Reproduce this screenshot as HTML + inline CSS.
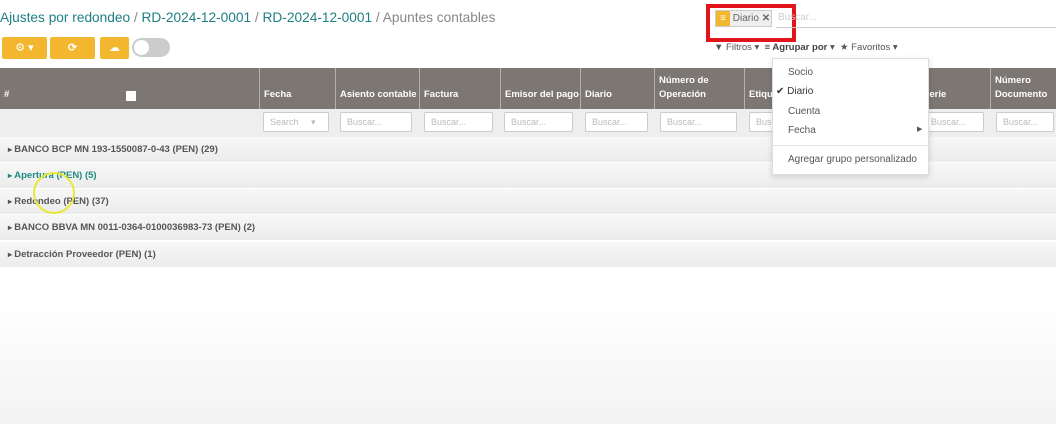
<!DOCTYPE html><html><head><meta charset="utf-8"><style>
*{box-sizing:border-box;margin:0;padding:0}
body{width:1056px;height:424px;overflow:hidden;background:#fff;font-family:"Liberation Sans",sans-serif;position:relative}
.a{position:absolute}
.bc{left:0;top:10px;font-size:13.7px;color:#1e7f82}
.bc .s{color:#888}
.btn{background:#f3b72f;height:22px;top:37px;border-radius:2px;color:#fff;font-size:11px;text-align:center;line-height:22px}
.hd{top:68px;height:41px;background:#7d7774}
.col{position:absolute;top:68px;height:41px;border-left:1px solid #b5b0ad;color:#fff;font-size:9.5px;font-weight:bold;padding:0 4px;display:flex;align-items:flex-end;padding-bottom:7px;line-height:14px}
.fr{top:109px;height:28px;left:0;width:1056px;background:#eeeeee}
.in{position:absolute;top:112px;height:20px;border:1px solid #ccc;background:#fff;font-size:9px;color:#bbb;padding:4px 6px;border-radius:2px}
.g{left:0;width:1056px;height:25px;background:linear-gradient(#f7f7f7,#ececec);font-size:9.5px;font-weight:bold;color:#555;padding-left:8px;line-height:25px}
.g:before{content:"▸ ";font-size:8px}
.dd{left:772px;top:58px;width:157px;height:117px;background:#fff;border:1px solid #ddd;box-shadow:0 2px 6px rgba(0,0,0,.15);font-size:10px;color:#555}
.dd div{position:absolute;left:15px}
</style></head><body>
<div class="a bc">Ajustes por redondeo <span class="s">/</span> RD-2024-12-0001 <span class="s">/</span> RD-2024-12-0001 <span class="s">/ Apuntes contables</span></div>
<div class="a btn" style="left:2px;width:45px">⚙ ▾</div>
<div class="a btn" style="left:50px;width:45px;font-weight:bold">⟳</div>
<div class="a btn" style="left:100px;width:29px">☁</div>
<div class="a" style="left:132px;top:38px;width:38px;height:19px;border-radius:10px;background:#ccc"><div class="a" style="left:2px;top:2px;width:15px;height:15px;border-radius:50%;background:#fff"></div></div>
<div class="a" style="left:706px;top:4px;width:90px;height:38px;border:4px solid #e0141a"></div>
<div class="a" style="left:715px;top:10px;width:57px;height:17px;border:1px solid #ccc;background:#eee;font-size:10px;color:#666;line-height:15px"><span style="display:inline-block;width:14px;height:15px;background:#f3b72f;color:#fff;text-align:center">≡</span> Diario <b>✕</b></div>
<div class="a" style="left:776px;top:27px;width:280px;border-top:1px solid #ccc"></div>
<div class="a" style="left:778px;top:12px;font-size:10px;color:#ccc">Buscar...</div>
<div class="a" style="left:714px;top:42px;font-size:9.5px;color:#555">▼ Filtros ▾ &nbsp;<b style="color:#444">≡ Agrupar por</b> ▾ &nbsp;★ Favoritos ▾</div>
<div class="a hd" style="left:0;width:1056px"></div>
<div class="col" style="left:0;border:0">#</div>
<div class="a" style="left:126px;top:91px;width:10px;height:10px;background:#fff"></div>
<div class="col" style="left:259px">Fecha</div>
<div class="col" style="left:335px">Asiento contable</div>
<div class="col" style="left:419px">Factura</div>
<div class="col" style="left:500px">Emisor del pago</div>
<div class="col" style="left:580px">Diario</div>
<div class="col" style="left:654px">Número de<br>Operación</div>
<div class="col" style="left:744px">Etiqueta</div>
<div class="col" style="left:918px">Serie</div>
<div class="col" style="left:990px">Número<br>Documento</div>
<div class="a fr"></div>
<div class="in" style="left:263px;width:66px">Search &nbsp;&nbsp;&nbsp; ▾</div>
<div class="in" style="left:340px;width:72px">Buscar...</div>
<div class="in" style="left:424px;width:69px">Buscar...</div>
<div class="in" style="left:504px;width:69px">Buscar...</div>
<div class="in" style="left:585px;width:63px">Buscar...</div>
<div class="in" style="left:660px;width:77px">Buscar...</div>
<div class="in" style="left:749px;width:60px">Buscar...</div>
<div class="in" style="left:924px;width:60px">Buscar...</div>
<div class="in" style="left:996px;width:58px">Buscar...</div>
<div class="a g" style="top:137px">BANCO BCP MN 193-1550087-0-43 (PEN) (29)</div>
<div class="a g" style="top:163px;color:#1e8a80">Apertura (PEN) (5)</div>
<div class="a g" style="top:189px">Redondeo (PEN) (37)</div>
<div class="a g" style="top:215px">BANCO BBVA MN 0011-0364-0100036983-73 (PEN) (2)</div>
<div class="a g" style="top:242px">Detracción Proveedor (PEN) (1)</div>
<div class="a" style="left:0;top:268px;width:1056px;height:156px;background:linear-gradient(#fff 20%,#f3f3f3)"></div>
<div class="a" style="left:33px;top:172px;width:42px;height:42px;border-radius:50%;border:2px solid #e8e83a"></div>
<div class="a dd">
<div style="top:8px">Socio</div>
<div style="top:27px;left:3px;color:#333">✔ Diario</div>
<div style="top:47px">Cuenta</div>
<div style="top:66px">Fecha</div><div style="top:66px;left:144px;font-size:7px">▶</div>
<div style="top:86px;left:0;width:155px;border-top:1px solid #e5e5e5"></div>
<div style="top:95px">Agregar grupo personalizado</div>
</div>
</body></html>
